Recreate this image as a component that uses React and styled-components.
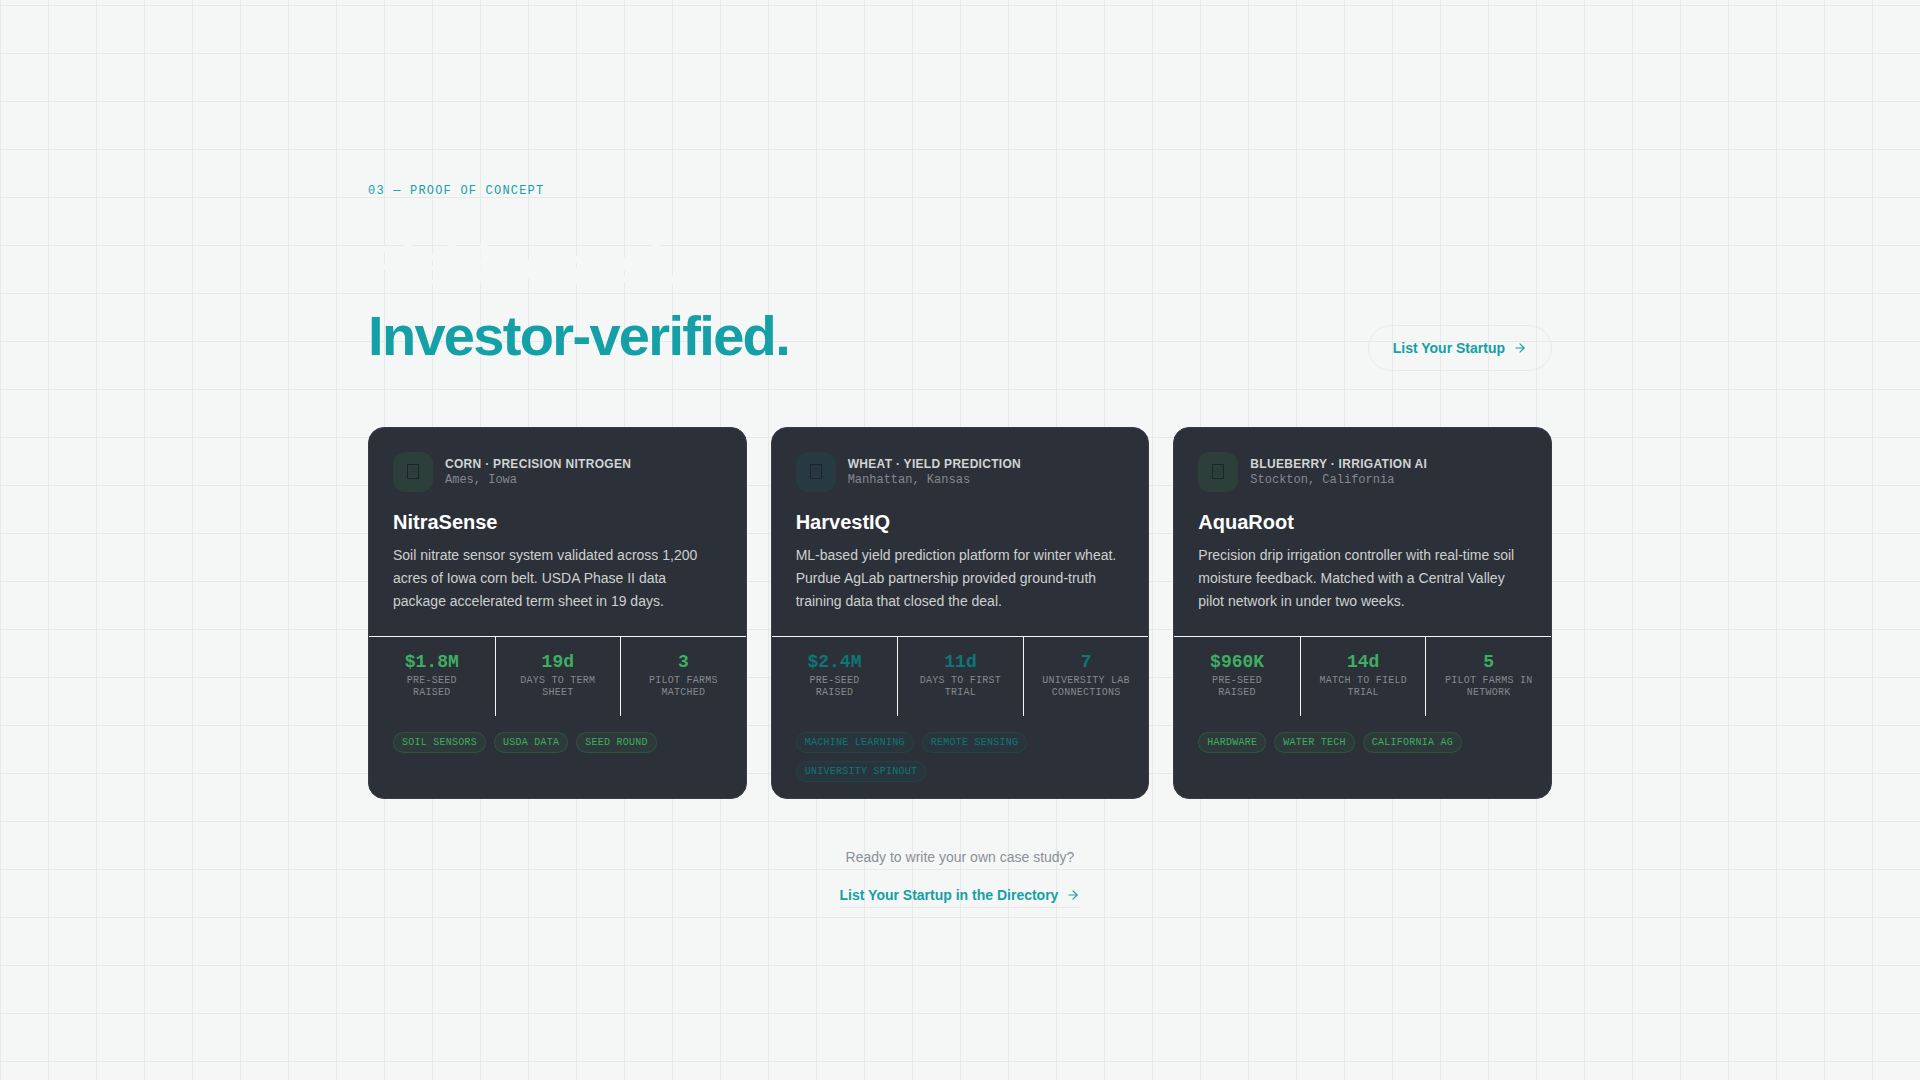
import React from "react";
import styled, { createGlobalStyle } from "styled-components";
import { ArrowRight } from "lucide-react";

const sans = `"Liberation Sans", Arial, sans-serif`;
const mono = `"Liberation Mono", "Courier New", monospace`;

const tones = {
  green: {
    text: "#3fae63",
    badge: "rgba(52, 168, 83, 0.13)",
    fill: "rgba(52, 168, 83, 0.09)",
    line: "rgba(52, 168, 83, 0.24)"
  },
  teal: {
    text: "#0f7678",
    badge: "rgba(13, 115, 119, 0.14)",
    fill: "rgba(13, 115, 119, 0.09)",
    line: "rgba(13, 115, 119, 0.2)"
  }
};

const GlobalStyle = createGlobalStyle`
  * {
    box-sizing: border-box;
  }

  body {
    margin: 0;
    background: #f4f7f6;
    font-family: ${sans};
  }

  h2, h3, p, dl, dt, dd, ul {
    margin: 0;
    padding: 0;
  }
`;

const Section = styled.section`
  min-height: 100vh;
  padding: 181px 48px 96px;
  background-color: #f4f7f6;
  background-image: linear-gradient(#e6eae9 1px, transparent 1px),
    linear-gradient(90deg, #e6eae9 1px, transparent 1px);
  background-size: 48px 48px;
  background-position: 0 5px;
`;

const Container = styled.div`
  max-width: 1184px;
  margin: 0 auto;
`;

const Header = styled.header`
  display: flex;
  align-items: flex-end;
  justify-content: space-between;
  margin-bottom: 56px;
`;

const Eyebrow = styled.p`
  margin-bottom: 28px;
  font-family: ${mono};
  font-size: 12px;
  line-height: 20px;
  letter-spacing: 0.1em;
  text-transform: uppercase;
  color: #14a0a6;
`;

const Heading = styled.h2`
  font-size: 56px;
  line-height: 71px;
  font-weight: 700;
  letter-spacing: -0.03em;
  color: #f4f7f6;
`;

const Accent = styled.span`
  display: block;
  color: #14a0a6;
`;

const ActionLink = styled.a`
  display: inline-flex;
  align-items: center;
  gap: 8px;
  font-size: 14px;
  line-height: 20px;
  font-weight: 700;
  color: #14a0a6;
  text-decoration: none;
`;

const PillLink = styled(ActionLink)`
  padding: 12px 24px;
  border: 1px solid #e6eae9;
  border-radius: 999px;
`;

const UnderlineLink = styled(ActionLink)`
  padding-bottom: 2px;
  border-bottom: 1px solid #e6eae9;
`;

const Cards = styled.div`
  display: grid;
  grid-template-columns: repeat(3, minmax(0, 1fr));
  gap: 24px;
`;

const Card = styled.article`
  border: 1px solid #3a3d47;
  border-radius: 16px;
  background: #2c3038;
  overflow: hidden;
`;

const CardBody = styled.div`
  padding: 24px 24px 23px;
`;

const CardTop = styled.div`
  display: flex;
  align-items: center;
  gap: 12px;
  margin-bottom: 16px;
`;

const Badge = styled.span`
  display: flex;
  align-items: center;
  justify-content: center;
  width: 40px;
  height: 40px;
  border-radius: 12px;
  background: ${({ $tone }) => tones[$tone].badge};
  color: #1d2428;
`;

const Category = styled.p`
  font-size: 12px;
  line-height: 16px;
  font-weight: 700;
  letter-spacing: 0.025em;
  text-transform: uppercase;
  color: #d1d5d4;
`;

const Place = styled.p`
  font-family: ${mono};
  font-size: 12px;
  line-height: 16px;
  color: #858991;
`;

const Name = styled.h3`
  margin-bottom: 8px;
  font-size: 20px;
  line-height: 28px;
  font-weight: 700;
  color: #ffffff;
`;

const Description = styled.p`
  font-size: 14px;
  line-height: 23px;
  color: #cdd1d0;
`;

const Stats = styled.dl`
  display: grid;
  grid-template-columns: repeat(3, minmax(0, 1fr));
  border-top: 1px solid #f4f7f6;
`;

const Stat = styled.div`
  display: flex;
  flex-direction: column-reverse;
  justify-content: flex-end;
  gap: 4px;
  padding: 16px 16px 17px;
  text-align: center;
  font-family: ${mono};

  & + & {
    border-left: 1px solid #f4f7f6;
  }
`;

const StatValue = styled.dd`
  font-size: 18px;
  line-height: 18px;
  font-weight: 700;
  color: ${({ $tone }) => tones[$tone].text};
`;

const StatLabel = styled.dt`
  font-size: 10px;
  line-height: 12px;
  letter-spacing: 0.025em;
  text-transform: uppercase;
  color: #858991;
`;

const Tags = styled.ul`
  display: flex;
  flex-wrap: wrap;
  gap: 8px;
  padding: 16px 24px;
  list-style: none;
`;

const Tag = styled.li`
  padding: 2px 8px;
  border: 1px solid ${({ $tone }) => tones[$tone].line};
  border-radius: 999px;
  background: ${({ $tone }) => tones[$tone].fill};
  font-family: ${mono};
  font-size: 10px;
  line-height: 15px;
  letter-spacing: 0.025em;
  text-transform: uppercase;
  color: ${({ $tone }) => tones[$tone].text};
`;

const Footer = styled.footer`
  display: flex;
  flex-direction: column;
  align-items: center;
  gap: 18px;
  margin-top: 48px;
`;

const Prompt = styled.p`
  font-size: 14px;
  line-height: 20px;
  color: #8b8f96;
`;

const studies = [
  {
    tone: "green",
    category: "Corn · Precision Nitrogen",
    place: "Ames, Iowa",
    name: "NitraSense",
    description:
      "Soil nitrate sensor system validated across 1,200 acres of Iowa corn belt. USDA Phase II data package accelerated term sheet in 19 days.",
    stats: [
      { value: "$1.8M", label: "Pre-seed raised" },
      { value: "19d", label: "Days to term sheet" },
      { value: "3", label: "Pilot farms matched" }
    ],
    tags: ["Soil Sensors", "USDA Data", "Seed Round"]
  },
  {
    tone: "teal",
    category: "Wheat · Yield Prediction",
    place: "Manhattan, Kansas",
    name: "HarvestIQ",
    description:
      "ML-based yield prediction platform for winter wheat. Purdue AgLab partnership provided ground-truth training data that closed the deal.",
    stats: [
      { value: "$2.4M", label: "Pre-seed raised" },
      { value: "11d", label: "Days to first trial" },
      { value: "7", label: "University lab connections" }
    ],
    tags: ["Machine Learning", "Remote Sensing", "University Spinout"]
  },
  {
    tone: "green",
    category: "Blueberry · Irrigation AI",
    place: "Stockton, California",
    name: "AquaRoot",
    description:
      "Precision drip irrigation controller with real-time soil moisture feedback. Matched with a Central Valley pilot network in under two weeks.",
    stats: [
      { value: "$960K", label: "Pre-seed raised" },
      { value: "14d", label: "Match to field trial" },
      { value: "5", label: "Pilot farms in network" }
    ],
    tags: ["Hardware", "Water Tech", "California Ag"]
  }
];

const BoxIcon = () => (
  <svg width="12" height="16" viewBox="0 0 12 16" fill="none" aria-hidden="true">
    <rect x="0.5" y="0.5" width="11" height="14" stroke="currentColor" />
    <path d="M3 4.5h6M3 7.5h6M3 10.5h6" stroke="currentColor" strokeOpacity="0.25" />
  </svg>
);

const StudyCard = ({ study }) => {
  const { tone, category, place, name, description, stats, tags } = study;

  return (
    <Card>
      <CardBody>
        <CardTop>
          <Badge $tone={tone}>
            <BoxIcon />
          </Badge>
          <div>
            <Category>{category}</Category>
            <Place>{place}</Place>
          </div>
        </CardTop>
        <Name>{name}</Name>
        <Description>{description}</Description>
      </CardBody>
      <Stats>
        {stats.map(({ value, label }) => (
          <Stat key={label}>
            <StatLabel>{label}</StatLabel>
            <StatValue $tone={tone}>{value}</StatValue>
          </Stat>
        ))}
      </Stats>
      <Tags>
        {tags.map((tag) => (
          <Tag key={tag} $tone={tone}>{tag}</Tag>
        ))}
      </Tags>
    </Card>
  );
};

export default function App() {
  return (
    <Section>
      <GlobalStyle />
      <Container>
        <Header>
          <div>
            <Eyebrow>03 — Proof of Concept</Eyebrow>
            <Heading>
              Field-tested.
              <Accent>Investor-verified.</Accent>
            </Heading>
          </div>
          <PillLink href="#list">
            List Your Startup
            <ArrowRight size={14} />
          </PillLink>
        </Header>
        <Cards>
          {studies.map((study) => (
            <StudyCard key={study.name} study={study} />
          ))}
        </Cards>
        <Footer>
          <Prompt>Ready to write your own case study?</Prompt>
          <UnderlineLink href="#directory">
            List Your Startup in the Directory
            <ArrowRight size={14} />
          </UnderlineLink>
        </Footer>
      </Container>
    </Section>
  );
}
